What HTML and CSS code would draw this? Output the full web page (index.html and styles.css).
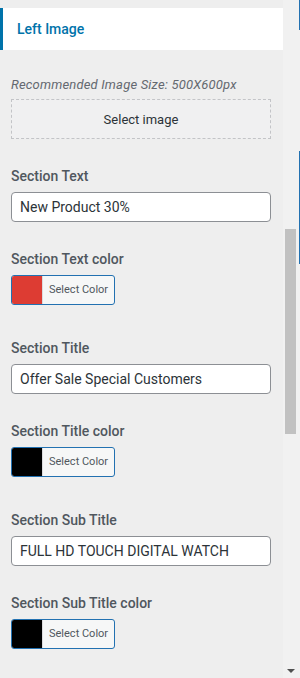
FILE: index.html
```html
<!DOCTYPE html>
<html lang="en">
  <head>
    <meta charset="UTF-8">
    <title>Left Image</title>
    <link rel="stylesheet" href="styles.css">
  </head>
  <body>
    <div class="customizer">
      <div class="sidebar">
        <div class="section-head">
          <h3>Left Image</h3>
        </div>
        <ul class="controls">
          <li class="control">
            <span class="description">Recommended Image Size: 500X600px</span>
            <button class="upload-button" type="button">Select image</button>
          </li>
          <li class="control">
            <label class="control-title">Section Text</label>
            <input class="text-input" type="text" value="New Product 30%">
          </li>
          <li class="control control-color">
            <label class="control-title">Section Text color</label>
            <button class="color-result" type="button">
              <span class="swatch swatch-red"></span>
              <span class="color-text">Select Color</span>
            </button>
          </li>
          <li class="control">
            <label class="control-title">Section Title</label>
            <input class="text-input" type="text" value="Offer Sale Special Customers">
          </li>
          <li class="control control-color">
            <label class="control-title">Section Title color</label>
            <button class="color-result" type="button">
              <span class="swatch swatch-black"></span>
              <span class="color-text">Select Color</span>
            </button>
          </li>
          <li class="control">
            <label class="control-title">Section Sub Title</label>
            <input class="text-input" type="text" value="FULL HD TOUCH DIGITAL WATCH">
          </li>
          <li class="control control-color">
            <label class="control-title">Section Sub Title color</label>
            <button class="color-result" type="button">
              <span class="swatch swatch-black"></span>
              <span class="color-text">Select Color</span>
            </button>
          </li>
        </ul>
      </div>

      <div class="scrollbar">
        <div class="thumb"></div>
        <div class="arrow-down"></div>
      </div>

      <div class="preview-edge">
        <div class="edge-line edge-top"></div>
        <div class="edge-line edge-mid"></div>
      </div>
    </div>
  </body>
</html>
```

FILE: styles.css
```css
html, body{
  margin: 0;
  padding: 0;
  height: 100%;
  overflow: hidden;
}

body{
  font-family: Roboto, "Liberation Sans", sans-serif;
  background: #eeeeee;
}

.customizer{
  display: flex;
  height: 100vh;
}

.sidebar{
  width: 283px;
  flex: none;
  background: #eeeeee;
  padding-top: 8px;
}

.section-head{
  background: #fff;
  border-left: 3px solid #0073aa;
  height: 42px;
}

.section-head h3{
  margin: 0;
  padding-left: 14px;
  font-size: 14px;
  font-weight: 500;
  line-height: 42px;
  color: #0073aa;
}

.controls{
  list-style: none;
  margin: 26px 0 0 0;
  padding: 0 12px 0 11px;
}

.control{
  margin-bottom: 27px;
}

.control-color{
  margin-bottom: 33px;
}

.description{
  display: block;
  font-size: 13px;
  line-height: 18px;
  font-style: italic;
  letter-spacing: 0.18px;
  color: #646970;
  margin-bottom: 5px;
}

.upload-button{
  display: block;
  width: 100%;
  height: 40px;
  box-sizing: border-box;
  border: 1px dashed #c3c4c7;
  background: #f0f0f1;
  font-family: inherit;
  font-size: 13px;
  color: #2c3338;
  padding: 0;
}

.control-title{
  display: block;
  font-size: 14px;
  font-weight: 500;
  line-height: 20px;
  color: #50575e;
  margin-bottom: 6px;
}

.text-input{
  display: block;
  width: 100%;
  height: 30px;
  box-sizing: border-box;
  border: 1px solid #8c8f94;
  border-radius: 4px;
  background: #fff;
  padding: 0 8px;
  font-family: inherit;
  font-size: 14px;
  color: #2c3338;
  margin: 0;
}

.color-result{
  display: flex;
  height: 30px;
  box-sizing: border-box;
  padding: 0;
  border: 1px solid #2271b1;
  border-radius: 3px;
  overflow: hidden;
  background: #f6f7f7;
  font-family: inherit;
}

.swatch{
  width: 30px;
  flex: none;
}

.swatch-red{
  background: #dd3c33;
}

.swatch-black{
  background: #000;
}

.color-text{
  border-left: 1px solid #dcdcde;
  padding: 0 6px;
  line-height: 28px;
  font-size: 11px;
  color: #50575e;
}

.scrollbar{
  width: 16px;
  flex: none;
  background: #f1f1f1;
  display: flex;
  flex-direction: column;
}

.thumb{
  margin-top: 229px;
  margin-left: 2px;
  width: 11px;
  height: 205px;
  background: #c1c1c1;
}

.arrow-down{
  margin-top: auto;
  margin-bottom: 5px;
  margin-left: 4px;
  width: 0;
  height: 0;
  border-left: 4px solid transparent;
  border-right: 4px solid transparent;
  border-top: 4px solid #505050;
}

.preview-edge{
  width: 1px;
  flex: none;
  background: #f1f1f1;
}

.edge-line{
  background: #2271b1;
}

.edge-top{
  height: 30px;
}

.edge-mid{
  margin-top: 121px;
  height: 113px;
}
```
